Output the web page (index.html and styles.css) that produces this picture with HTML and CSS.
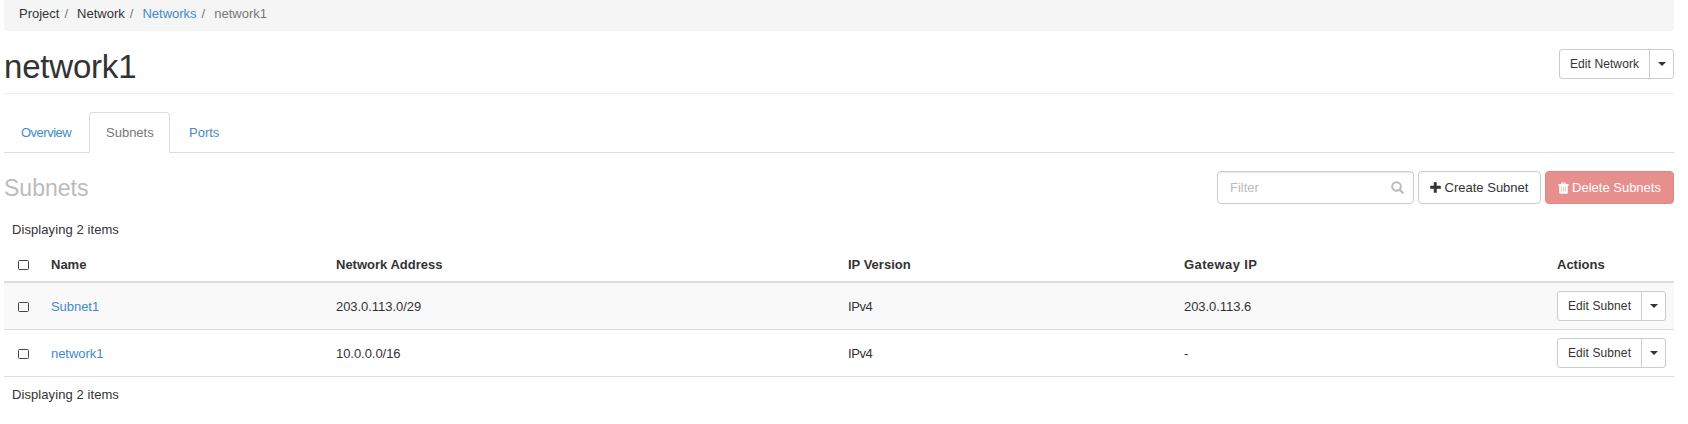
FILE: index.html
```html
<!DOCTYPE html>
<html lang="en">
<head>
<meta charset="utf-8">
<title>network1</title>
<link rel="stylesheet" href="styles.css">
</head>
<body>
<ol class="breadcrumb">
  <li>Project</li><li>Network</li><li><a href="#">Networks</a></li><li class="active">network1</li>
</ol>
<header class="page-header">
  <h1>network1</h1>
  <div class="btn-group">
    <button class="btn-sm">Edit Network</button><button class="btn-sm toggle" aria-label="More"><span class="caret"></span></button>
  </div>
</header>
<nav class="tabs">
  <a class="tab overview" href="#">Overview</a>
  <a class="tab active" href="#">Subnets</a>
  <a class="tab" href="#">Ports</a>
</nav>
<div class="table-header">
  <h3>Subnets</h3>
  <div class="table-actions">
    <label class="filter">
      <input type="text" placeholder="Filter">
      <svg width="13" height="13" viewBox="0 0 13 13"><circle cx="5.5" cy="5.5" r="4.3" fill="none" stroke="#bbb" stroke-width="2"/><path d="M8.8 8.8l2.9 2.9" stroke="#bbb" stroke-width="2.3" stroke-linecap="round"/></svg>
    </label>
    <button class="btn create"><svg width="11" height="11" viewBox="0 0 11 11"><path d="M4.1.5h2.3v3.6H10.5v2.4H6.4V10.5H4.1V6.5H.5V4.1h3.6z" fill="#333" stroke="#333" stroke-width=".6" stroke-linejoin="round"/></svg><span>Create Subnet</span></button>
    <button class="btn danger"><svg width="11" height="12" viewBox="0 0 11 12"><path d="M.3 2h2.8L3.8.4h3.4L7.9 2h2.8v1.6h-.9v6.9c0 .8-.5 1.3-1.2 1.3H2.4c-.7 0-1.2-.5-1.2-1.3V3.6H.3z" fill="#fff"/><path d="M3.5 4.6v5M5.5 4.6v5M7.5 4.6v5M4.3 1.6h2.4" stroke="#efb3b1" stroke-width=".8"/></svg><span>Delete Subnets</span></button>
  </div>
</div>
<div class="count">Displaying 2 items</div>
<table class="subnets">
  <colgroup><col class="c-check"><col class="c-name"><col class="c-address"><col class="c-version"><col class="c-gateway"><col></colgroup>
  <thead>
    <tr><th><span class="check"></span></th><th>Name</th><th>Network Address</th><th>IP Version</th><th class="gateway">Gateway IP</th><th>Actions</th></tr>
  </thead>
  <tbody>
    <tr class="odd"><td><span class="check"></span></td><td><a href="#">Subnet1</a></td><td>203.0.113.0/29</td><td class="version">IPv4</td><td>203.0.113.6</td>
      <td class="actions"><div class="btn-group"><button class="btn-sm subnet">Edit Subnet</button><button class="btn-sm toggle" aria-label="More"><span class="caret"></span></button></div></td></tr>
    <tr><td><span class="check"></span></td><td><a href="#">network1</a></td><td>10.0.0.0/16</td><td class="version">IPv4</td><td>-</td>
      <td class="actions"><div class="btn-group"><button class="btn-sm subnet">Edit Subnet</button><button class="btn-sm toggle" aria-label="More"><span class="caret"></span></button></div></td></tr>
  </tbody>
</table>
<div class="count bottom">Displaying 2 items</div>
</body>
</html>
```
FILE: styles.css
```css
* { box-sizing: border-box; }
body {
  margin: 0 14px 0 4px;
  font: 13px/18px "Liberation Sans", Arial, sans-serif;
  color: #333;
  background: #fff;
  overflow: hidden;
}
a { color: #428bca; text-decoration: none; }
button, input { font-family: inherit; color: #333; margin: 0; }
svg { display: block; flex: none; }
.breadcrumb {
  display: flex;
  height: 31px;
  margin: 0;
  padding: 5px 15px 0;
  list-style: none;
  background: #f5f5f5;
  border-radius: 0 0 4px 4px;
}
.breadcrumb li + li::before { content: "/"; padding: 0 9px 0 5px; color: #777; }
.breadcrumb .active { color: #777; }
.page-header {
  display: flex;
  justify-content: space-between;
  height: 63px;
  padding-top: 18px;
  border-bottom: 1px solid #eee;
}
h1 { margin: 0; font-size: 33px; line-height: 36px; font-weight: 400; letter-spacing: -.2px; }
.btn-group { display: flex; }
.btn-sm {
  height: 30px;
  width: 91px;
  padding: 0;
  font-size: 12px;
  line-height: 18px;
  letter-spacing: .1px;
  background: #fff;
  border: 1px solid #ccc;
  border-radius: 3px 0 0 3px;
}
.btn-sm.subnet { width: 85px; }
.btn-sm.toggle {
  display: flex;
  align-items: center;
  justify-content: center;
  width: 25px;
  margin-left: -1px;
  border-radius: 0 3px 3px 0;
}
.caret { border: 4px solid transparent; border-top-color: #333; border-bottom: 0; }
.tabs {
  display: flex;
  gap: 2px;
  height: 41px;
  margin-top: 18px;
  border-bottom: 1px solid #ddd;
}
.tab { height: 41px; padding: 11px 16px 0; border: 1px solid transparent; border-radius: 4px 4px 0 0; }
.tab.overview { width: 83px; letter-spacing: -.5px; }
.tab.active { width: 81px; color: #777; background: #fff; border-color: #ddd; border-bottom-color: #fff; }
.table-header { display: flex; justify-content: space-between; padding-top: 18px; height: 58px; }
h3 { margin: 3px 0 0; font-size: 23px; line-height: 28px; font-weight: 400; color: #bbb; }
.table-actions { display: flex; gap: 4px; }
.filter {
  display: flex;
  align-items: center;
  width: 197px;
  height: 33px;
  padding: 0 9px 0 12px;
  border: 1px solid #ccc;
  border-radius: 4px;
  box-shadow: inset 0 1px 1px rgba(0, 0, 0, .075);
}
.filter input { flex: 1; min-width: 0; padding: 0; border: 0; outline: 0; background: none; font-size: 13px; }
.filter input::placeholder { color: #bbb; opacity: 1; }
.btn {
  display: flex;
  align-items: center;
  justify-content: center;
  gap: 4px;
  height: 33px;
  padding: 0 1px 0 0;
  font-size: 13px;
  background: #fff;
  border: 1px solid #ccc;
  border-radius: 4px;
}
.btn.create { width: 123px; }
.btn.danger { gap: 3px; width: 129px; padding: 0; color: #fff; background: #e78f8d; border-color: #e28482; }
.count { height: 35px; padding: 10px 8px 0; letter-spacing: .08px; }
.subnets { width: 1670px; table-layout: fixed; border-collapse: separate; border-spacing: 0; }
.c-check { width: 39px; }
.c-name { width: 285px; }
.c-address { width: 512px; }
.c-version { width: 336px; }
.c-gateway { width: 373px; }
.subnets th, .subnets td { padding: 0 0 0 8px; text-align: left; vertical-align: middle; }
.subnets th { height: 37px; padding-top: 2px; border-bottom: 2px solid #ddd; }
.subnets th.gateway { letter-spacing: .4px; }
.subnets td { height: 47px; padding-top: 2px; border-bottom: 1px solid #ddd; letter-spacing: -.05px; }
.subnets td.version { letter-spacing: -.4px; }
.subnets td.actions { padding-top: 0; }
.odd td { background: #f9f9f9; }
.check { display: block; width: 11px; height: 10px; margin-left: 6px; border: 1px solid #444; border-radius: 1.5px; }
.count.bottom { padding-top: 9px; }
```
